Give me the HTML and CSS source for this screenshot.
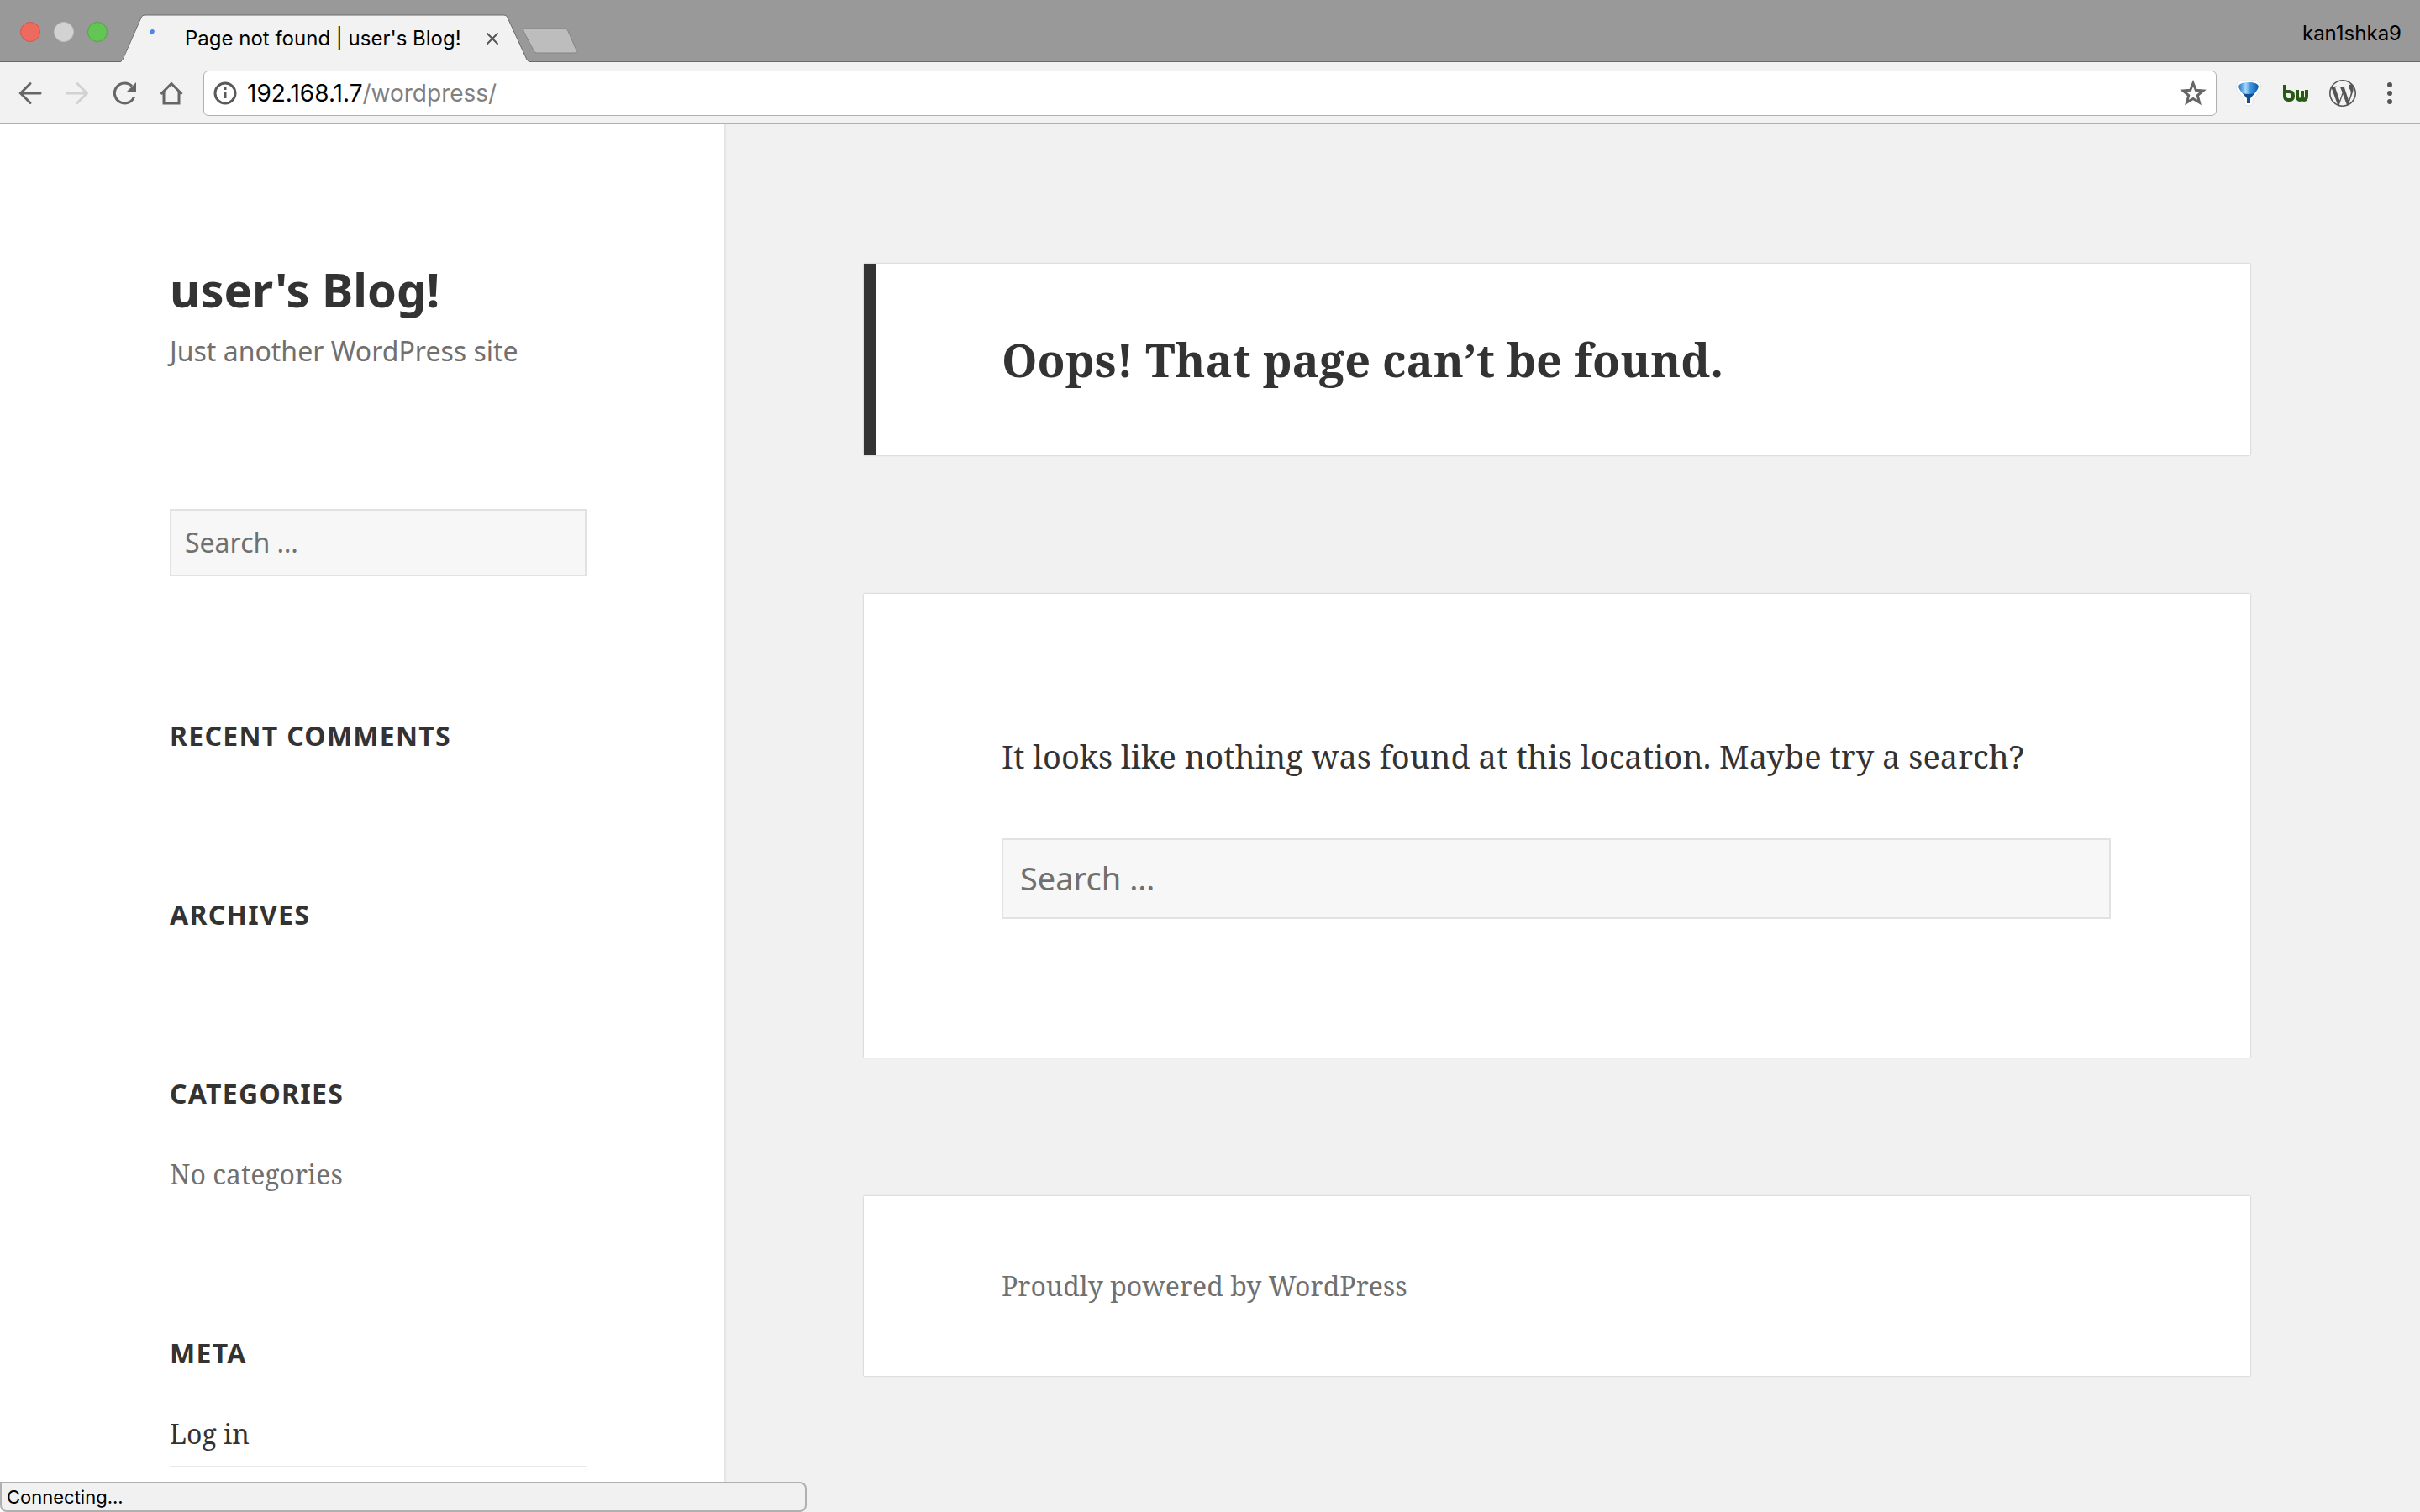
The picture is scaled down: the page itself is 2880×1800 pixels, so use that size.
FILE: index.html
```html
<!DOCTYPE html>
<html lang="en">
<head>
<meta charset="utf-8">
<title>Page not found | user's Blog!</title>
<link rel="stylesheet" href="styles.css">
</head>
<body>
<div class="browser">
  <header class="chrome">
    <div class="titlebar">
      <div class="lights"><span class="light light-close"></span><span class="light light-min"></span><span class="light light-max"></span></div>
      <div class="tab">
        <svg class="tab-shape" viewBox="0 0 486 57" aria-hidden="true"><path d="M0 57 L1 55 L24 4 Q25 1 28 1 H456 Q459 1 460 4 L483 54 Q484 56 486 57 Z" fill="#f2f2f2"/><path d="M0 56 L2 54 L24 4 Q25 1 28 1 H456 Q459 1 460 4 L483 54 Q484 56 486 56" fill="none" stroke="#6b6b6b" stroke-width="1"/></svg>
        <svg class="spinner" viewBox="0 0 32 32" aria-hidden="true"><ellipse cx="5" cy="8" rx="2.500" ry="3.200" transform="rotate(35 5 8)" fill="#4c86f5"/></svg>
        <span class="tab-title">Page not found | user's Blog!</span>
        <button class="tab-close" type="button" aria-label="Close tab"><svg viewBox="0 0 16 16"><path d="M2 2 L14 14 M14 2 L2 14" stroke="#555" stroke-width="2" stroke-linecap="round"/></svg></button>
      </div>
      <button class="new-tab" type="button" aria-label="New tab"><svg viewBox="0 0 66 32"><path d="M4 1 H50 Q53 1 54 4 L64 27 Q65 30 62 30 H17 Q14 30 13 27 L1 4 Q0 1 4 1 Z" fill="#bdbdbd" stroke="#858585"/></svg></button>
      <span class="profile">kan1shka9</span>
    </div>
    <div class="toolbar">
      <nav class="nav">
        <button type="button" aria-label="Back"><svg viewBox="0 0 32 32"><path d="M28 16 H5 M16 4.500 L4.500 16 L16 27.500" fill="none" stroke="#666" stroke-width="3" stroke-linecap="round"/></svg></button>
        <button type="button" aria-label="Forward"><svg viewBox="0 0 32 32"><path d="M4 16 H27 M16 4.500 L27.500 16 L16 27.500" fill="none" stroke="#d2d2d2" stroke-width="3" stroke-linecap="round"/></svg></button>
        <button type="button" aria-label="Reload"><svg viewBox="0 0 32 32"><path d="M27.500 20.500 A12 12 0 1 1 25 7.500" fill="none" stroke="#666" stroke-width="3"/><path d="M30 3 V15 H18 Z" fill="#666"/></svg></button>
        <button type="button" aria-label="Home"><svg viewBox="0 0 32 32"><path d="M3.500 17 L16 4.500 L28.500 17 M7 14 V28 H25 V14" fill="none" stroke="#666" stroke-width="3"/></svg></button>
      </nav>
      <div class="omnibox">
        <svg class="icon" viewBox="0 0 28 28" aria-hidden="true"><circle cx="14" cy="14" r="12" fill="none" stroke="#5a5a5a" stroke-width="3"/><path d="M14 12 V20 M14 7 V10" stroke="#5a5a5a" stroke-width="3"/></svg>
        <span class="url"><b>192.168.1.7</b>/wordpress/</span>
        <button class="star" type="button" aria-label="Bookmark"><svg viewBox="0 0 32 32"><path d="M16 4 L19.3 12.3 L28 13 L21.3 18.6 L23.5 27 L16 22.4 L8.500 27 L10.700 18.600 L4 13 L12.700 12.300 Z" fill="none" stroke="#666" stroke-width="3"/></svg></button>
      </div>
      <div class="extensions">
        <button type="button" aria-label="Filter extension"><svg viewBox="0 0 32 32"><defs><linearGradient id="g" x1="0" x2="1"><stop offset="0" stop-color="#1c6fc0"/><stop offset=".35" stop-color="#a9d8fa"/><stop offset=".6" stop-color="#3f93dc"/><stop offset="1" stop-color="#0b58a8"/></linearGradient></defs><path d="M1 8 Q2 0 16 0 Q30 0 31 8 Q31 13 21 23 V28 Q20 31 16 31 Q12 31 11 28 V23 Q1 13 1 8 Z" fill="#fff" stroke="#e4e4e4"/><path d="M4 8 Q5 3 16 3 Q27 3 28 8 Q27 13 18 22 V28 H14 V22 Q5 13 4 8 Z" fill="url(#g)"/><path d="M9 16 Q16 18 23 16 L18 22 V28 H14 V22 Z" fill="#0f4f94"/></svg></button>
        <button type="button" aria-label="BuiltWith"><svg viewBox="0 0 32 32"><path d="M3 6 V19 Q3 24 7 24 H9 Q13 24 13 19 Q13 14 8 14 H4 M18 12 V19 Q18 24 21 24 Q24 24 24 19 V13 M24 19 Q24 24 26 24 Q29 24 29 19 V12" fill="none" stroke="#275a16" stroke-width="4"/></svg></button>
        <button type="button" aria-label="WordPress"><svg viewBox="0 0 24 24"><path fill="#555" d="M21.469 6.825c.84 1.537 1.318 3.3 1.318 5.175 0 3.979-2.156 7.456-5.363 9.325l3.295-9.527c.615-1.540.82-2.771.82-3.864 0-.405-.026-.78-.07-1.110m-7.981.105c.647-.03 1.232-.105 1.232-.105.582-.075.514-.93-.067-.899 0 0-1.755.135-2.880.135-1.064 0-2.850-.15-2.850-.15-.585-.03-.661.855-.075.885 0 0 .54.061 1.125.09l1.680 4.605-2.370 7.080L5.354 6.900c.649-.03 1.234-.1 1.234-.1.585-.075.516-.93-.065-.896 0 0-1.746.138-2.874.138-.2 0-.438-.008-.69-.015C4.911 3.150 8.235 1.215 12 1.215c2.809 0 5.365 1.072 7.286 2.833-.046-.003-.091-.009-.141-.009-1.060 0-1.812.923-1.812 1.914 0 .89.513 1.643 1.060 2.531.411.720.89 1.643.89 2.977 0 .915-.354 1.994-.821 3.479l-1.075 3.585-3.900-11.610.001.014zM12 22.784c-1.059 0-2.081-.153-3.048-.437l3.237-9.406 3.315 9.087c.024.053.05.101.078.149-1.120.393-2.325.607-3.582.607M1.211 12c0-1.564.336-3.050.935-4.390L7.290 21.709C3.694 19.960 1.212 16.271 1.211 12M12 0C5.385 0 0 5.385 0 12s5.385 12 12 12 12-5.385 12-12S18.615 0 12 0"/></svg></button>
        <button type="button" aria-label="Menu"><svg viewBox="0 0 32 32"><g fill="#555"><circle cx="16" cy="6" r="3"/><circle cx="16" cy="16" r="3"/><circle cx="16" cy="26" r="3"/></g></svg></button>
      </div>
    </div>
  </header>
  <div class="site">
    <aside class="sidebar">
      <h1 class="site-title">user's Blog!</h1>
      <p class="site-description">Just another WordPress site</p>
      <input class="search search-side" type="search" placeholder="Search …" aria-label="Search for">
      <section class="widget"><h2>Recent Comments</h2></section>
      <section class="widget"><h2>Archives</h2></section>
      <section class="widget"><h2>Categories</h2><p class="muted">No categories</p></section>
      <section class="widget"><h2>Meta</h2><ul><li><a href="#login">Log in</a></li></ul></section>
    </aside>
    <main class="content">
      <header class="card page-header"><h1>Oops! That page can’t be found.</h1></header>
      <section class="card page-content">
        <p>It looks like nothing was found at this location. Maybe try a search?</p>
        <input class="search search-main" type="search" placeholder="Search …" aria-label="Search for">
      </section>
      <footer class="card page-footer"><a href="#wordpress">Proudly powered by WordPress</a></footer>
    </main>
  </div>
  <div class="status">Connecting...</div>
</div>
</body>
</html>
```
FILE: styles.css
```css
* { box-sizing: border-box; margin: 0; padding: 0; }
body { color: #333; background: #f1f1f1; font-family: "Noto Serif", "Droid Serif", "DejaVu Serif", serif; }
button { border: 0; background: none; display: block; }
svg { display: block; width: 100%; height: 100%; }
a { color: inherit; text-decoration: none; }
.browser { height: 100vh; display: flex; flex-direction: column; overflow: hidden; }

.chrome { flex: none; font-family: Inter, sans-serif; color: #000; border-bottom: 1px solid #b0b0b0; background: #f2f2f2; }
.titlebar { height: 74px; display: flex; align-items: flex-end; background: #999; border-bottom: 1px solid #6b6b6b; }
.lights { display: flex; gap: 16px; padding: 0 16px 23px 24px; }
.light { width: 24px; height: 24px; border-radius: 50%; border: 1px solid #d9544b; background: #ee6a5f; }
.light-min { background: #d2d2d2; border-color: #c2c2c2; }
.light-max { background: #62c554; border-color: #4fa73f; }
.tab { position: relative; width: 486px; height: 57px; margin-bottom: -1px; display: flex; align-items: center; padding: 0 36px 0 32px; }
.tab-shape { position: absolute; inset: 0; }
.spinner { position: relative; width: 32px; height: 32px; margin-right: 12px; }
.tab-title { position: relative; flex: 1; font-size: 24px; white-space: nowrap; }
.tab-close { position: relative; width: 16px; height: 16px; }
.new-tab { width: 66px; height: 32px; margin: 0 0 8px -8px; }
.profile { margin-left: auto; padding: 0 22px 18px 0; font-size: 24px; line-height: 30px; }
.toolbar { height: 73px; display: flex; align-items: center; padding: 0 20px; gap: 22px; }
.nav { display: flex; gap: 24px; }
.nav button, .extensions button, .star { width: 32px; height: 32px; }
.omnibox { flex: 1; height: 54px; display: flex; align-items: center; gap: 12px; padding: 0 11px; background: #fff; border: 1px solid #b0b0b0; border-radius: 6px; }
.icon { width: 28px; height: 28px; flex: none; }
.url { flex: 1; font-size: 28px; line-height: 36px; color: #808080; }
.url b { font-weight: 400; color: #000; }
.extensions { display: flex; gap: 24px; }

.site { flex: 1; display: grid; grid-template-columns: 30% 1fr; min-height: 0; }
.sidebar { background: #fff; border-right: 2px solid #e6e6e6; padding: 164px 164px 0 202px; }
.site-title { font: bold 56px/64px "Noto Sans", sans-serif; }
.site-description { font: 32px/48px "Noto Sans", sans-serif; color: #707070; margin: 18px 0 164px; }
.search { display: block; width: 100%; border: 2px solid #e2e2e2; background: #f7f7f7; font-family: "Noto Sans", sans-serif; }
.search::placeholder { color: #707070; opacity: 1; }
.search-side { height: 80px; padding: 0 16px 2px; font-size: 32px; margin-bottom: 166px; }
.search-main { height: 96px; padding: 0 20px 2px; font-size: 38px; }
.widget { margin-bottom: 165px; font-size: 32px; line-height: 48px; }
.widget h2 { font: bold 32px/48px "Noto Sans", sans-serif; text-transform: uppercase; letter-spacing: 0.04em; }
.widget p, .widget ul { margin-top: 48px; }
.widget ul { list-style: none; }
.widget li { border-bottom: 2px solid #e9e9e9; padding-bottom: 14px; }
.muted { color: #707070; }
.content { padding: 166px 202px 0 164px; display: flex; flex-direction: column; gap: 165px; }
.card { background: #fff; box-shadow: 0 0 2px rgba(0, 0, 0, .25); }
.page-header { border-left: 14px solid #333; padding: 80px 150px; }
.page-header h1 { font-size: 54px; line-height: 68px; }
.page-content { padding: 161px 166px 165px 164px; }
.page-content p { font-size: 38px; line-height: 64px; margin-bottom: 66px; }
.page-footer { padding: 80px 164px; font-size: 32px; line-height: 54px; color: #707070; }

.status { position: fixed; left: 0; bottom: 0; width: 960px; height: 36px; padding-left: 6px; font: 22px/32px Inter, sans-serif; color: #000; background: #f1f1f1; border: 2px solid #b0b0b0; border-radius: 0 8px 8px 8px; }
```
